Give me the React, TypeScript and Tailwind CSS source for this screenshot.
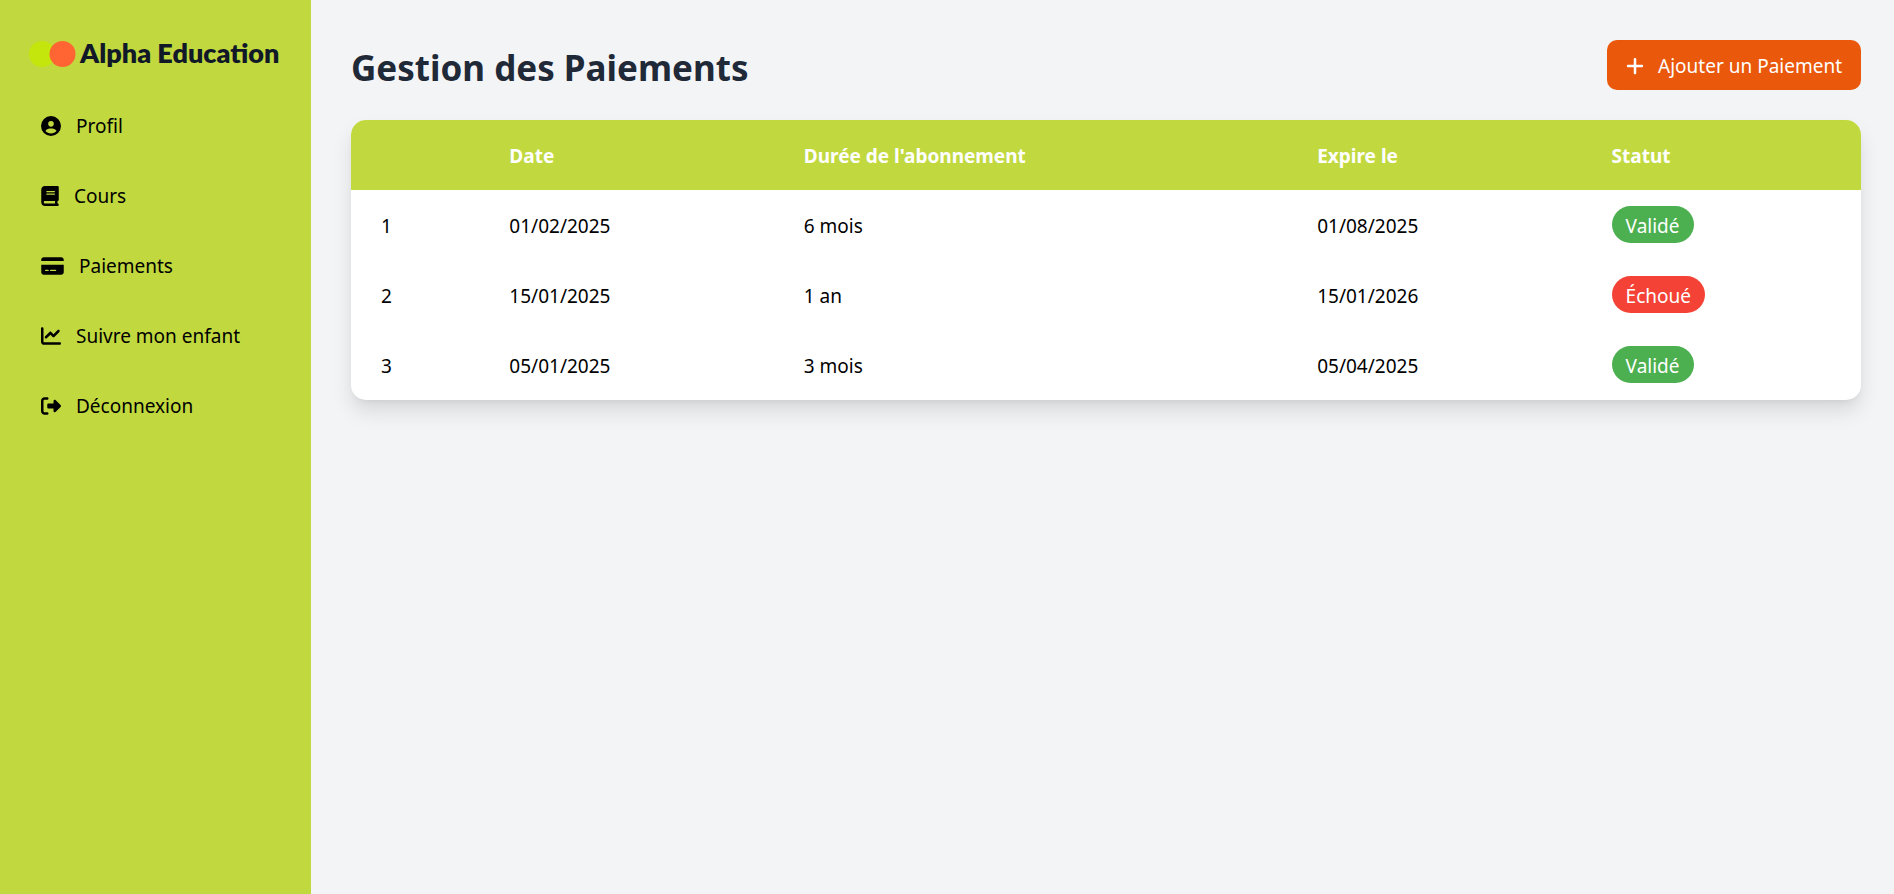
import {
  FaBook,
  FaChartLine,
  FaCircleUser,
  FaCreditCard,
  FaPlus,
  FaRightFromBracket,
} from "react-icons/fa6";

const navItems = [
  { label: "Profil", Icon: FaCircleUser, width: "w-5" },
  { label: "Cours", Icon: FaBook, width: "w-[18px]" },
  { label: "Paiements", Icon: FaCreditCard, width: "w-[23px]" },
  { label: "Suivre mon enfant", Icon: FaChartLine, width: "w-5" },
  { label: "Déconnexion", Icon: FaRightFromBracket, width: "w-5" },
];

const payments = [
  { id: 1, date: "01/02/2025", duration: "6 mois", expires: "01/08/2025", valid: true },
  { id: 2, date: "15/01/2025", duration: "1 an", expires: "15/01/2026", valid: false },
  { id: 3, date: "05/01/2025", duration: "3 mois", expires: "05/04/2025", valid: true },
];

const cell = "px-[30px] pt-[21px] pb-[19px]";

function Logo() {
  return (
    <a href="#" className="flex h-[67px] items-center gap-1 pl-[29px] pt-10">
      <svg viewBox="0 0 47 26" className="h-[26px] w-[47px] shrink-0" aria-hidden="true">
        <circle cx="13" cy="13" r="13" fill="#c4e60c" />
        <circle cx="33.500" cy="13" r="13" fill="#ff6433" />
      </svg>
      <span className="whitespace-nowrap pb-0.5 font-['Lato',sans-serif] text-[27px] leading-[27px] font-extrabold text-[#111827]">
        Alpha Education
      </span>
    </a>
  );
}

function Sidebar() {
  return (
    <aside className="w-[311px] shrink-0 bg-[#c1d93f]">
      <Logo />
      <nav className="mt-[34px] flex flex-col gap-5 pl-[41px]">
        {navItems.map(({ label, Icon, width }) => (
          <a key={label} href="#" className="flex h-[50px] items-center gap-[15px]">
            <Icon className={`h-5 shrink-0 ${width}`} />
            {label}
          </a>
        ))}
      </nav>
    </aside>
  );
}

function Status({ valid }: { valid: boolean }) {
  return (
    <span
      className={`rounded-full px-[14px] pt-[7px] pb-1 text-white ${valid ? "bg-[#4caf50]" : "bg-[#f44336]"}`}
    >
      {valid ? "Validé" : "Échoué"}
    </span>
  );
}

export default function App() {
  return (
    <div className="flex min-h-screen bg-[#f3f4f6] font-['Noto_Sans',sans-serif] text-[19px] leading-[30px] text-black">
      <Sidebar />
      <main className="min-w-0 flex-1 py-10 pr-[33px] pl-10">
        <header className="flex items-start justify-between">
          <h1 className="pt-[5px] text-[35px] leading-[45px] font-bold text-[#1f2937]">
            Gestion des Paiements
          </h1>
          <button
            type="button"
            className="flex items-center gap-[14px] rounded-[10px] bg-[#ea580c] px-[19px] pt-[11px] pb-[9px] text-white"
          >
            <FaPlus className="h-5 w-[18px]" />
            Ajouter un Paiement
          </button>
        </header>
        <div className="mt-[30px] overflow-hidden rounded-[15px] bg-white shadow-[0_12px_20px_rgba(0,0,0,0.1),0_5px_8px_-5px_rgba(0,0,0,0.1)]">
          <table className="w-full table-fixed text-left">
            <colgroup>
              <col className="w-[8.5%]" />
              <col className="w-[19.5%]" />
              <col className="w-[34%]" />
              <col className="w-[19.5%]" />
              <col />
            </colgroup>
            <thead className="bg-[#c1d93f] text-white">
              <tr>
                <th className={cell} />
                <th className={cell}>Date</th>
                <th className={cell}>Durée de l'abonnement</th>
                <th className={cell}>Expire le</th>
                <th className={cell}>Statut</th>
              </tr>
            </thead>
            <tbody>
              {payments.map((p) => (
                <tr key={p.id}>
                  <td className={cell}>{p.id}</td>
                  <td className={cell}>{p.date}</td>
                  <td className={cell}>{p.duration}</td>
                  <td className={cell}>{p.expires}</td>
                  <td className={cell}>
                    <Status valid={p.valid} />
                  </td>
                </tr>
              ))}
            </tbody>
          </table>
        </div>
      </main>
    </div>
  );
}
